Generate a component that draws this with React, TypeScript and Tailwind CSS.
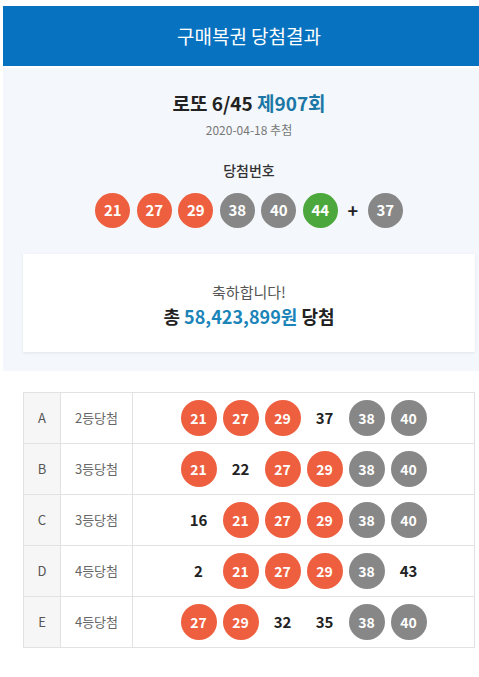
import React from "react";

const FONT = { fontFamily: '"Noto Sans CJK KR", "Noto Sans", sans-serif' };

type Kind = "o" | "g" | "n" | "x";

function Ball({ n, kind, size }: { n: number; kind: Kind; size: "lg" | "sm" }) {
  const dim = size === "lg" ? "w-[35px] h-[35px] text-[15px]" : "w-[36px] h-[36px] text-[14px]";
  if (kind === "x") {
    return (
      <div className={`${dim} flex items-center justify-center font-bold text-[#222] text-[15px]`}>{n}</div>
    );
  }
  const bg = kind === "o" ? "bg-[#ee5f3f]" : kind === "g" ? "bg-[#4ca83d]" : "bg-[#878787]";
  return (
    <div className={`${dim} ${bg} rounded-full flex items-center justify-center font-bold text-white`}>{n}</div>
  );
}

const rows: { l: string; r: string; b: [number, Kind][] }[] = [
  { l: "A", r: "2등당첨", b: [[21, "o"], [27, "o"], [29, "o"], [37, "x"], [38, "n"], [40, "n"]] },
  { l: "B", r: "3등당첨", b: [[21, "o"], [22, "x"], [27, "o"], [29, "o"], [38, "n"], [40, "n"]] },
  { l: "C", r: "3등당첨", b: [[16, "x"], [21, "o"], [27, "o"], [29, "o"], [38, "n"], [40, "n"]] },
  { l: "D", r: "4등당첨", b: [[2, "x"], [21, "o"], [27, "o"], [29, "o"], [38, "n"], [43, "x"]] },
  { l: "E", r: "4등당첨", b: [[27, "o"], [29, "o"], [32, "x"], [35, "x"], [38, "n"], [40, "n"]] },
];

export default function App() {
  return (
    <div className="w-[479px] h-[677px] overflow-hidden bg-white pt-[6px] pl-[3px]" style={FONT}>
      <div className="w-[492px]">
        <div className="h-[60px] bg-[#0672c0] flex items-center justify-center text-white text-[19px]">
          구매복권 당첨결과
        </div>
        <div className="mt-[2px] bg-[#f4f7fb] flex flex-col items-center pt-[22px] pb-[19px]">
          <div className="h-[26px] leading-[26px] text-[19px] font-bold text-[#222]">
            로또 6/45 <span className="text-[#1b78a6]">제907회</span>
          </div>
          <div className="mt-[5px] h-[18px] leading-[18px] text-[12px] text-[#777]">2020-04-18 추첨</div>
          <div className="mt-[21px] h-[20px] leading-[20px] text-[14px] font-medium text-[#333]">당첨번호</div>
          <div className="mt-[13px] flex items-center gap-[6.5px]">
            <Ball n={21} kind="o" size="lg" />
            <Ball n={27} kind="o" size="lg" />
            <Ball n={29} kind="o" size="lg" />
            <Ball n={38} kind="n" size="lg" />
            <Ball n={40} kind="n" size="lg" />
            <Ball n={44} kind="g" size="lg" />
            <div className="w-[17px] text-center text-[18px] font-bold text-[#222]">+</div>
            <Ball n={37} kind="n" size="lg" />
          </div>
          <div className="mt-[26px] self-stretch mx-[20px] h-[98px] bg-white shadow-[0_1px_3px_rgba(0,0,0,0.08)] flex flex-col items-center pt-[27px]">
            <div className="h-[22px] leading-[22px] text-[15px] text-[#555]">축하합니다!</div>
            <div className="h-[26px] leading-[26px] text-[18px] font-bold text-[#222]">
              총 <span className="text-[#1b84b8]">58,423,899원</span> 당첨
            </div>
          </div>
        </div>
        <div className="mt-[21px] mx-[20px] border-t border-l border-[#e2e2e2]">
          {rows.map((row) => (
            <div key={row.l} className="grid grid-cols-[37px_72px_1fr] h-[51px] border-b border-[#e2e2e2]">
              <div className="bg-[#f6f6f6] border-r border-[#e2e2e2] flex items-center justify-center text-[13px] text-[#555]">
                {row.l}
              </div>
              <div className="border-r border-[#e2e2e2] flex items-center justify-center text-[13px] text-[#666]">
                {row.r}
              </div>
              <div className="border-r border-[#e2e2e2] flex items-center justify-center gap-[6px]">
                {row.b.map(([n, k], i) => (
                  <Ball key={i} n={n} kind={k} size="sm" />
                ))}
              </div>
            </div>
          ))}
        </div>
      </div>
    </div>
  );
}
